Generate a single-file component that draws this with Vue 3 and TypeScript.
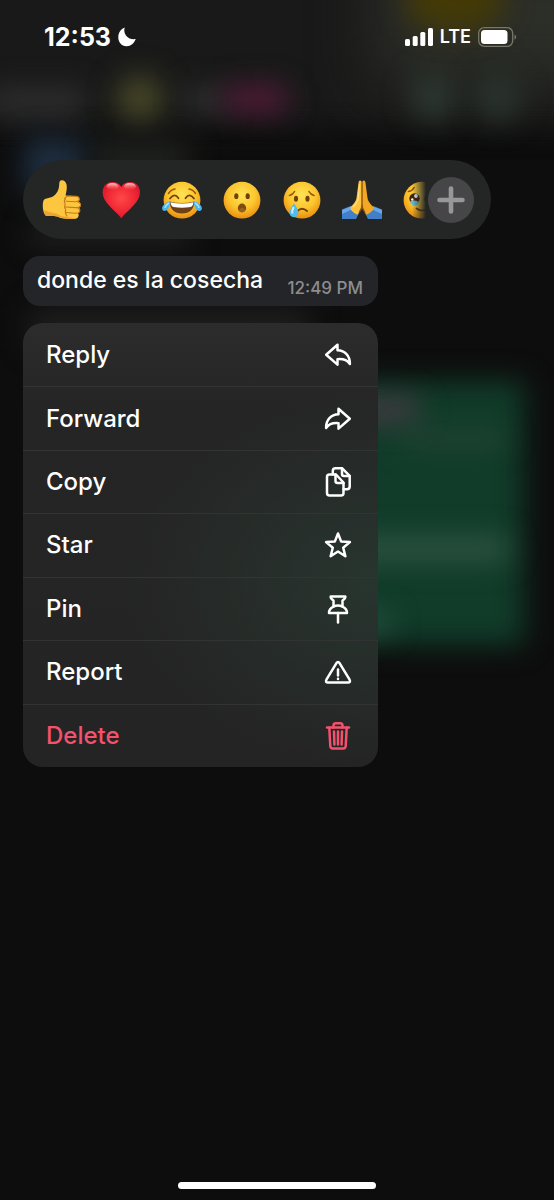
<script setup lang="ts">
interface MenuAction {
  label: string
  paths: string[]
  danger?: boolean
}

const actions: MenuAction[] = [
  { label: 'Reply', paths: ['M14.5 4.8 3.2 14.8l11.3 9.8v-5.4c5.4-.5 9.6.8 12.4 4.8C27 15.8 22 10.6 14.5 10.3Z'] },
  { label: 'Forward', paths: ['M15.5 4.8 26.8 14.8l-11.3 9.8v-5.4c-5.4-.5-9.6.8-12.4 4.8C3 15.8 8 10.6 15.5 10.3Z'] },
  {
    label: 'Copy',
    paths: [
      'M6.5 7.5h6.5l7.5 8v10.5q0 2.500-2.500 2.500H6.500Q4 28.500 4 26V10q0-2.500 2.500-2.500Z',
      'M12.500 7.500V14q0 2 2 2h6',
      'M9.800 7.300V4q0-2.700 2.700-2.700h6.700l7.500 7.500v10.700q0 2.700-2.700 2.700h-3.300',
      'M19 1.500v5.500q0 2 2 2h5.500',
    ],
  },
  { label: 'Star', paths: ['M15 3.5 18.2 11.6l8.700.5-6.700 5.600 2.200 8.500L15 21.500l-7.400 4.700 2.200-8.500-6.700-5.600 8.700-.5Z'] },
  {
    label: 'Pin',
    paths: [
      'M7.700 2.500h14.600q.3 2-2.800 4v6q4.700 2.500 4.500 6.500H6q-.2-4 4.500-6.500v-6q-3.100-2-2.800-4Z',
      'M10.500 12.500q4.500-2 9 0',
      'M15 19v9.500',
    ],
  },
  {
    label: 'Report',
    paths: [
      'M13.300 6.300q1.700-2.500 3.400 0l9.900 16.400q1.300 2.800-1.600 2.800H5q-2.900 0-1.600-2.800Z',
      'M15 12.500v6',
      'M15 21.700v.2',
    ],
  },
  {
    label: 'Delete',
    danger: true,
    paths: [
      'M4 6.500h22',
      'M10.500 6.500v-2q0-2.300 2.300-2.300h4.400q2.300 0 2.300 2.300v2',
      'M6.300 6.800l1 18.200q.1 2.500 2.600 2.500h10.200q2.500 0 2.600-2.500l1-18.200',
      'M11 10.500l.4 13M15 10.500v13M19 10.500l-.4 13',
    ],
  },
]

const reactions = ['thumbs up', 'heart', 'tears of joy', 'surprised', 'crying', 'folded hands', 'holding back tears']
</script>

<template>
  <div class="screen">
    <svg class="backdrop" viewBox="0 0 554 1200" preserveAspectRatio="xMidYMin slice" aria-hidden="true">
      <defs>
        <filter id="soft" x="-150%" y="-200%" width="400%" height="500%" color-interpolation-filters="sRGB"><feGaussianBlur stdDeviation="14" /></filter>
        <filter id="wide" x="-100%" y="-100%" width="300%" height="300%" color-interpolation-filters="sRGB"><feGaussianBlur stdDeviation="30" /></filter>
      </defs>
      <rect width="554" height="1200" fill="#0d0d0d" />
      <rect x="-80" y="-80" width="714" height="208" fill="#191919" filter="url(#soft)" />
      <rect x="375" y="-60" width="260" height="145" fill="#2c2e28" filter="url(#wide)" />
      <ellipse cx="455" cy="0" rx="50" ry="32" fill="#443a06" filter="url(#soft)" />
      <ellipse cx="433" cy="97" rx="22" ry="24" fill="#2d3831" filter="url(#soft)" />
      <ellipse cx="498" cy="97" rx="22" ry="24" fill="#2b352f" filter="url(#soft)" />
      <rect x="-10" y="88" width="95" height="28" fill="#2e2e2e" filter="url(#soft)" />
      <ellipse cx="140" cy="99" rx="24" ry="24" fill="#464628" filter="url(#soft)" />
      <rect x="185" y="88" width="40" height="24" fill="#323232" filter="url(#soft)" />
      <rect x="226" y="86" width="60" height="26" fill="#551b3a" filter="url(#soft)" />
      <rect x="24" y="138" width="62" height="56" fill="#1e2e40" filter="url(#soft)" />
      <rect x="92" y="138" width="98" height="44" fill="#1e201d" filter="url(#soft)" />
      <rect x="30" y="228" width="160" height="16" fill="#282828" filter="url(#soft)" />
      <rect x="30" y="308" width="280" height="40" fill="#1e1e1e" filter="url(#soft)" />
      <rect x="240" y="381" width="284" height="264" fill="#113c2a" filter="url(#soft)" />
      <rect x="340" y="398" width="78" height="24" fill="#483a44" filter="url(#soft)" />
      <rect x="400" y="432" width="106" height="14" fill="#274436" filter="url(#soft)" />
      <rect x="330" y="537" width="178" height="24" fill="#305444" filter="url(#soft)" />
      <rect x="350" y="614" width="40" height="18" fill="#2b5646" filter="url(#soft)" />
    </svg>

    <header class="status">
      <div class="status-group">
        <time class="clock">12:53</time>
        <svg width="18" height="20" viewBox="0 0 18 20" aria-hidden="true">
          <path d="M6.700.6C4.800 7 9.700 13.300 17.700 12.100C16 16.800 12.500 19.400 8.400 19.200C3.500 18.900.3 15.200.3 10.400C.4 5.700 2.800 2.100 6.700.6Z" fill="#fff" />
        </svg>
      </div>
      <div class="status-group">
        <svg width="28" height="18" viewBox="0 0 28 18" fill="#fff" aria-hidden="true">
          <rect x="0" y="11" width="5" height="7" rx="1.500" />
          <rect x="7.700" y="8" width="5" height="10" rx="1.500" />
          <rect x="15.300" y="4" width="5" height="14" rx="1.500" />
          <rect x="23" y="0" width="5" height="18" rx="1.500" />
        </svg>
        <span class="network">LTE</span>
        <svg width="39" height="20" viewBox="0 0 39 20" aria-hidden="true">
          <rect x=".7" y=".7" width="34" height="18.600" rx="5.500" fill="none" stroke="#77776a" stroke-width="1.300" />
          <rect x="3" y="3" width="26.500" height="14" rx="3.500" fill="#fff" />
          <path d="M36.500 7.200q3.400 2.800 0 5.600Z" fill="#77776a" />
        </svg>
      </div>
    </header>

    <main class="content">
      <section class="reactions" aria-label="Reactions">
        <div class="emoji-strip">
          <button v-for="(name, i) in reactions" :key="name" type="button" class="emoji" :aria-label="name">
            <svg width="40" height="40" viewBox="0 0 40 40" aria-hidden="true">
              <defs>
                <radialGradient :id="'face' + i" cx=".5" cy=".36" r=".66">
                  <stop offset="0" stop-color="#ffe356" />
                  <stop offset=".55" stop-color="#fdc62f" />
                  <stop offset="1" stop-color="#e98b0c" />
                </radialGradient>
              </defs>
              <template v-if="i === 0">
                <path d="M1.500 20.500C3 17.500 8 18.500 11 16.500C15 13.500 17 10 17.200 5C17.300 1 18.300.2 20 .3C24.500.6 25.500 6 24.500 10.500C24.200 12.500 23.800 14 23.600 15.600L34.500 16.300C37.500 16.500 38.500 20.500 36.500 21.700C39.800 23 39.300 27 36.800 27.700C39 29 38.500 32.600 36 33.300C37.500 35 36.500 38.500 33.500 38.700C27 39.300 20 39 16.500 37C12 35 8 36.800 3.500 35.500C.5 32 .3 24 1.500 20.500Z" fill="#fdc641" />
                <path d="M2 30C8 33 13 32 19 36L34 38.600Q26 39.700 17 37.300C12 35 8 36.800 3.500 35.500Q2 33 2 30Z" fill="#eda42d" />
                <path d="M22.500 18.500Q24 16 28 16L34.500 16.400Q38 17 37 20Q36.300 21.800 33 21.700L24 21.200M36 22Q39.500 23.500 38.300 26Q37.200 28 33.500 27.600L23.600 27M36 28Q38.500 29.500 37.500 31.700Q36.500 33.400 33 33.200L24 32.500M23.500 19Q21.300 21 23.300 24Q21.700 27 23.700 29.500Q22.500 33 25 36" fill="none" stroke="#c77b17" stroke-width="1.100" stroke-linecap="round" />
              </template>
              <template v-else-if="i === 1">
                <defs>
                  <radialGradient id="heart" cx=".5" cy=".45" r=".65">
                    <stop offset="0" stop-color="#ff4848" />
                    <stop offset=".6" stop-color="#ee2533" />
                    <stop offset="1" stop-color="#c51325" />
                  </radialGradient>
                  <linearGradient id="shine" x2="0" y2="1">
                    <stop stop-color="#ffd2d2" />
                    <stop offset="1" stop-color="#ff6a6a" stop-opacity="0" />
                  </linearGradient>
                </defs>
                <path d="M19.300 7C15.500-.5.600-.2.600 12.500C.6 22.500 12.500 29.500 19.300 38.300C26 29.500 38 22.500 38 12.500C38-.2 23-.5 19.300 7Z" fill="url(#heart)" />
                <ellipse cx="10.500" cy="6.500" rx="6" ry="3.500" fill="url(#shine)" />
                <ellipse cx="28" cy="6.500" rx="6" ry="3.500" fill="url(#shine)" />
              </template>
              <template v-else-if="i === 5">
                <path d="M0 29.500 8.500 26 17 33 14 39H0ZM40 29.500 31.500 26 23 33 26 39H40Z" fill="#417fc9" />
                <path d="M0 30 9 26.500l3 2L0 34ZM40 30 31 26.500l-3 2L40 34Z" fill="#69a7ea" />
                <path d="M19.800 3C19.500-.2 16.700-.2 16.500 3L14.500 18C14 22 10.500 25 8.200 27.500Q9 32 15.500 34.800C18 31 20 28 19.800 23Z" fill="#fdc33f" />
                <path d="M20.200 3C20.500-.2 23.300-.2 23.500 3L25.500 18C26 22 29.500 25 31.800 27.500Q31 32 24.500 34.800C22 31 20 28 20.200 23Z" fill="#f2a823" />
                <path d="M20 2.500V24Q20.200 28.500 17 32.500M20 24Q20 28.500 23 32.500" fill="none" stroke="#995309" stroke-width="1.200" />
                <path d="M17.500 4 16.200 19Q14.500 24 11 27" fill="none" stroke="#ffe17c" stroke-width="1.200" />
              </template>
              <template v-else>
                <circle cx="20" cy="20.200" r="18.400" :fill="'url(#face' + i + ')'" />
                <template v-if="i === 2">
                  <path d="M6.500 13.500Q9 9.500 13 9M33.500 13.500Q31 9.500 27 9" fill="none" stroke="#9a5a0b" stroke-width="1.500" stroke-linecap="round" />
                  <path d="M8 18.500Q12.500 12.500 16.500 18.300M23.500 18.300Q27.500 12.500 32 18.500" fill="none" stroke="#74400a" stroke-width="1.800" stroke-linecap="round" />
                  <path d="M7.500 21.500Q20 24.500 32.500 21.500Q31.500 33.500 20 33.500T7.500 21.500Z" fill="#704018" />
                  <path d="M8.500 22.200Q20 24.800 31.500 22.200Q31 26.500 28.500 27Q20 28.500 11.500 27Q9 26.500 8.500 22.200Z" fill="#fff" />
                  <path d="M8.500 21C8 28 4 32.500 1 30.500C-1.500 28 1 23.500 8.500 21ZM31.500 21C32 28 36 32.500 39 30.500C41.500 28 39 23.500 31.500 21Z" fill="#46b6f1" />
                  <path d="M7 23Q3.500 25 3 28M33 23Q36.500 25 37 28" fill="none" stroke="#a6e5ff" stroke-width="1.500" />
                </template>
                <template v-else-if="i === 3">
                  <ellipse cx="14.300" cy="16.200" rx="2.100" ry="2.900" fill="#704208" />
                  <ellipse cx="25.700" cy="16.200" rx="2.100" ry="2.900" fill="#704208" />
                  <ellipse cx="20" cy="28" rx="4.200" ry="4.400" fill="#7c4c11" />
                  <ellipse cx="20" cy="30" rx="2.900" ry="2" fill="#946221" />
                </template>
                <template v-else-if="i === 4">
                  <ellipse cx="14" cy="18.800" rx="2.100" ry="3" fill="#704208" />
                  <ellipse cx="25.500" cy="18.800" rx="2.100" ry="3" fill="#704208" />
                  <path d="M7.500 15.500Q11 14.500 12.500 11.500M32 15.500Q28.500 14.500 27 11.500" fill="none" stroke="#92590c" stroke-width="1.600" stroke-linecap="round" />
                  <path d="M15.500 31Q20 26.500 25 31" fill="none" stroke="#704208" stroke-width="1.900" stroke-linecap="round" />
                  <path d="M12 23.500C8.500 28.500 7.200 31 7.600 33.500C8.500 38.500 15.500 38.500 16.300 33.500C16.700 31 15.500 28.500 12 23.500Z" fill="#54b9ec" />
                  <path d="M11.800 27Q9.500 31 10.500 33.500" fill="none" stroke="#c2f2ff" stroke-width="2" />
                </template>
                <template v-else>
                  <circle cx="12.500" cy="18.500" r="5.200" fill="#432509" />
                  <circle cx="27.500" cy="18.500" r="5.200" fill="#432509" />
                  <path d="M8.200 21.500Q12 19.500 16.800 22Q15 27 11 25.500Q8.500 24 8.200 21.500Z" fill="#67bddd" />
                  <circle cx="14" cy="16" r="1.900" fill="#fff" />
                  <circle cx="10.300" cy="19.500" r="1.200" fill="#fff" />
                  <path d="M6.500 11.500Q10.500 11 12 7.500M33.500 11.500Q29.500 11 28 7.500" fill="none" stroke="#8d540c" stroke-width="1.600" stroke-linecap="round" />
                  <path d="M14.500 28.500Q20 32.500 25.500 28.500" fill="none" stroke="#70400b" stroke-width="1.700" stroke-linecap="round" />
                </template>
              </template>
            </svg>
          </button>
        </div>
        <button type="button" class="more" aria-label="More reactions">
          <svg width="46" height="46" viewBox="0 0 46 46" aria-hidden="true">
            <path d="M23 11.500v23M11.500 23h23" stroke="#97979a" stroke-width="4.600" stroke-linecap="round" />
          </svg>
        </button>
      </section>

      <article class="bubble">
        <p class="message">donde es la cosecha</p>
        <time class="sent">12:49 PM</time>
      </article>

      <ul class="menu">
        <li v-for="action in actions" :key="action.label" class="menu-row">
          <button type="button" class="menu-button" :class="{ danger: action.danger }">
            <span>{{ action.label }}</span>
            <svg class="icon" width="30" height="30" viewBox="0 0 30 30" aria-hidden="true">
              <path v-for="d in action.paths" :key="d" :d="d" />
            </svg>
          </button>
        </li>
      </ul>
    </main>

    <div class="home-indicator"></div>
  </div>
</template>

<style>
body {
  margin: 0;
  background: #0d0d0d;
}
</style>

<style scoped>
.screen {
  position: relative;
  display: flex;
  flex-direction: column;
  min-height: 100vh;
  overflow: hidden;
  box-sizing: border-box;
  padding-bottom: 11px;
  color: #fff;
  font-family: Inter, "Liberation Sans", sans-serif;
}

.backdrop {
  position: absolute;
  inset: 0;
  width: 100%;
  height: 100%;
}

.status,
.content,
.home-indicator {
  position: relative;
}

.status {
  display: flex;
  align-items: center;
  justify-content: space-between;
  padding: 21px 37px 0 44px;
}

.status-group {
  display: flex;
  align-items: center;
  gap: 7px;
}

.clock {
  font-size: 25px;
  line-height: 32px;
  font-weight: 700;
}

.network {
  font-size: 18px;
  line-height: 32px;
  font-weight: 600;
}

.content {
  display: flex;
  flex-direction: column;
  gap: 17px;
  padding: 107px 23px 24px;
}

button {
  margin: 0;
  padding: 0;
  border: 0;
  background: none;
  color: inherit;
  font: inherit;
  cursor: pointer;
}

.reactions {
  display: flex;
  align-items: center;
  box-sizing: border-box;
  width: 100%;
  max-width: 468px;
  padding: 17px 17px 16px 0;
  border-radius: 40px;
  background: #242625;
}

.emoji-strip {
  display: flex;
  flex: 1;
  gap: 20px;
  min-width: 0;
  overflow: hidden;
  padding-left: 19px;
  mask-image: linear-gradient(to right, #000 calc(100% - 16px), transparent calc(100% - 2px));
}

.emoji {
  flex: none;
  height: 40px;
}

.emoji svg,
.more svg {
  display: block;
}

.more {
  flex: none;
  border-radius: 50%;
  background: #464649;
}

.bubble {
  display: flex;
  align-items: flex-end;
  justify-content: space-between;
  box-sizing: border-box;
  width: 100%;
  max-width: 355px;
  padding: 8px 15px 6px 14px;
  border-radius: 17px;
  background: #242528;
}

.message {
  margin: 0;
  padding-bottom: 4px;
  font-size: 23px;
  line-height: 32px;
  font-weight: 500;
}

.sent {
  color: #8d8d90;
  font-size: 17px;
  line-height: 24px;
  font-weight: 500;
}

.menu {
  display: grid;
  grid-auto-rows: 1fr;
  box-sizing: border-box;
  width: 100%;
  max-width: 355px;
  min-height: 444px;
  margin: 0;
  padding: 0;
  overflow: hidden;
  list-style: none;
  border-radius: 20px;
  background:
    radial-gradient(ellipse 70% 42% at 100% 58%, #28352f, transparent),
    linear-gradient(#2c2c2c, #252525 20%, #242424);
}

.menu-row {
  display: flex;
}

.menu-row + .menu-row {
  border-top: 1px solid #323433;
}

.menu-button {
  display: flex;
  flex: 1;
  align-items: center;
  justify-content: space-between;
  padding: 0 25px 0 23px;
  font-size: 24px;
  line-height: 32px;
  font-weight: 500;
  text-align: left;
}

.danger {
  color: #f4516c;
}

.icon {
  fill: none;
  stroke: currentColor;
  stroke-width: 2.5;
  stroke-linecap: round;
  stroke-linejoin: round;
}

.home-indicator {
  align-self: center;
  width: 198px;
  height: 7px;
  margin-top: auto;
  border-radius: 4px;
  background: #fff;
}
</style>
